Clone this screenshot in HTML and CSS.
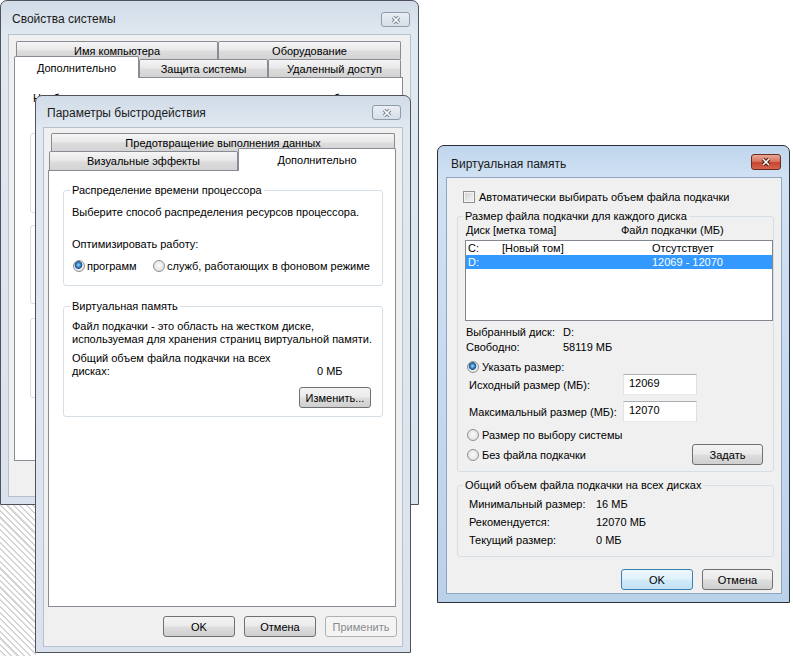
FILE: index.html
```html
<!DOCTYPE html>
<html lang="ru">
<head>
    <meta charset="UTF-8">
    <title>Виртуальная память</title>
    <link rel="stylesheet" href="styles.css">
</head>
<body>
    <div class="desktop">
        <div class="hatch"></div>

        <!-- Свойства системы (inactive, behind everything) -->
        <div class="win win-system">
            <div class="win-title">
                <span class="title-text">Свойства системы</span>
                <span class="close">
                    <svg width="14" height="10" viewBox="0 0 14 10"><path class="x-out" d="M4 2 10 8M10 2 4 8"/><path class="x-in" d="M4 2 10 8M10 2 4 8"/></svg>
                </span>
            </div>
            <div class="client">
                <div class="tab-row tab-row-back">
                    <div class="tab tab-name">Имя компьютера</div>
                    <div class="tab tab-hw">Оборудование</div>
                </div>
                <div class="tab-row tab-row-front">
                    <div class="tab tab-active tab-adv">Дополнительно</div>
                    <div class="tab tab-protect">Защита системы</div>
                    <div class="tab tab-remote">Удаленный доступ</div>
                </div>
                <div class="panel panel-system">
                    <p class="admin-note">Необходимо иметь права администратора для изменения большинства</p>
                    <div class="group-stub stub-perf"></div>
                    <div class="group-stub stub-profiles"></div>
                    <div class="group-stub stub-boot"></div>
                </div>
            </div>
        </div>

        <!-- Параметры быстродействия -->
        <div class="win win-perf">
            <div class="win-title">
                <span class="title-text">Параметры быстродействия</span>
                <span class="close">
                    <svg width="14" height="10" viewBox="0 0 14 10"><path class="x-out" d="M4 2 10 8M10 2 4 8"/><path class="x-in" d="M4 2 10 8M10 2 4 8"/></svg>
                </span>
            </div>
            <div class="client">
                <div class="tab-row tab-row-back">
                    <div class="tab tab-dep">Предотвращение выполнения данных</div>
                </div>
                <div class="tab-row tab-row-front">
                    <div class="tab tab-visual">Визуальные эффекты</div>
                    <div class="tab tab-active tab-extra">Дополнительно</div>
                </div>
                <div class="panel panel-perf">
                    <fieldset class="group group-cpu">
                        <legend>Распределение времени процессора</legend>
                        <p class="line">Выберите способ распределения ресурсов процессора.</p>
                        <p class="line line-optimize">Оптимизировать работу:</p>
                        <div class="radio-row">
                            <label class="opt opt-programs"><span class="radio checked"></span>программ</label>
                            <label class="opt"><span class="radio"></span>служб, работающих в фоновом режиме</label>
                        </div>
                    </fieldset>

                    <fieldset class="group group-vm">
                        <legend>Виртуальная память</legend>
                        <p class="line line-first">Файл подкачки - это область на жестком диске,</p>
                        <p class="line">используемая для хранения страниц виртуальной памяти.</p>
                        <div class="total-line">
                            <span class="total-text">Общий объем файла подкачки на всех<br>дисках:</span>
                            <span>0 МБ</span>
                        </div>
                        <div class="change-row">
                            <button class="btn">Изменить...</button>
                        </div>
                    </fieldset>
                </div>
                <div class="dialog-buttons">
                    <button class="btn">OK</button>
                    <button class="btn">Отмена</button>
                    <button class="btn btn-disabled">Применить</button>
                </div>
            </div>
        </div>

        <!-- Виртуальная память (active) -->
        <div class="win win-vm">
            <div class="win-title">
                <span class="title-text">Виртуальная память</span>
                <span class="close close-active">
                    <svg width="14" height="10" viewBox="0 0 14 10"><path class="x-out" d="M4 2 10 8M10 2 4 8"/><path class="x-in" d="M4 2 10 8M10 2 4 8"/></svg>
                </span>
            </div>
            <div class="client">
                <label class="check-row"><span class="checkbox"></span>Автоматически выбирать объем файла подкачки</label>

                <fieldset class="group group-drives">
                    <legend>Размер файла подкачки для каждого диска</legend>
                    <div class="list-head">
                        <span class="col-disk">Диск [метка тома]</span>
                        <span>Файл подкачки (МБ)</span>
                    </div>
                    <div class="listbox">
                        <div class="list-item">
                            <span class="col-drive">C:</span>
                            <span class="col-label">[Новый том]</span>
                            <span>Отсутствует</span>
                        </div>
                        <div class="list-item selected">
                            <span class="col-drive">D:</span>
                            <span class="col-label"></span>
                            <span>12069 - 12070</span>
                        </div>
                    </div>
                    <div class="info-row info-first"><span class="info-label">Выбранный диск:</span><span>D:</span></div>
                    <div class="info-row"><span class="info-label">Свободно:</span><span>58119 МБ</span></div>

                    <label class="opt opt-vm opt-custom"><span class="radio checked"></span>Указать размер:</label>
                    <div class="field-row">
                        <span class="field-label">Исходный размер (МБ):</span>
                        <input class="textbox" type="text" value="12069">
                    </div>
                    <div class="field-row field-max">
                        <span class="field-label">Максимальный размер (МБ):</span>
                        <input class="textbox" type="text" value="12070">
                    </div>
                    <label class="opt opt-vm opt-system"><span class="radio"></span>Размер по выбору системы</label>
                    <div class="set-row">
                        <label class="opt opt-vm"><span class="radio"></span>Без файла подкачки</label>
                        <button class="btn btn-set">Задать</button>
                    </div>
                </fieldset>

                <fieldset class="group group-total">
                    <legend>Общий объем файла подкачки на всех дисках</legend>
                    <div class="total-row total-first"><span class="total-label">Минимальный размер:</span><span>16 МБ</span></div>
                    <div class="total-row"><span class="total-label">Рекомендуется:</span><span>12070 МБ</span></div>
                    <div class="total-row"><span class="total-label">Текущий размер:</span><span>0 МБ</span></div>
                </fieldset>

                <div class="dialog-buttons vm-buttons">
                    <button class="btn btn-default">OK</button>
                    <button class="btn btn-cancel">Отмена</button>
                </div>
            </div>
        </div>
    </div>
</body>
</html>
```

FILE: styles.css
```css
* {
    margin: 0;
    padding: 0;
    box-sizing: border-box;
}

body {
    font-family: "Liberation Sans", Arial, sans-serif;
    font-size: 11px;
    color: #000;
    background: #fff;
}

.desktop {
    position: relative;
    width: 793px;
    height: 656px;
    overflow: hidden;
}

.hatch {
    position: absolute;
    left: 0;
    top: 505px;
    width: 36px;
    height: 151px;
    background: repeating-linear-gradient(45deg, #fff 0, #fff 3px, #d4d4d4 3px, #d4d4d4 4.5px);
}

/* ---------- windows ---------- */

.win {
    position: absolute;
    display: flex;
    flex-direction: column;
    border: 1px solid #4e535b;
    border-radius: 7px 7px 0 0;
    background: linear-gradient(#d1dce8, #e0e8f0 32px, #dae3ed);
}

.win-system { left: 0; top: 0; width: 419px; height: 505px; padding: 0 7px 7px; }
.win-perf { left: 35px; top: 95px; width: 376px; height: 558px; padding: 0 7px 5px; }
.win-vm {
    left: 437px;
    top: 145px;
    width: 353px;
    height: 458px;
    padding: 0 7px 8px 8px;
    border-color: #2b3038;
    background: linear-gradient(#c0d6ed, #d0e1f3 31px, #bad1ea);
}

.win-title {
    display: flex;
    justify-content: space-between;
    align-items: flex-start;
    flex: none;
    font-size: 12px;
    color: #1a1a1a;
}

.title-text { line-height: 16px; }

.win-system .win-title { height: 33px; padding-left: 4px; }
.win-system .title-text { margin-top: 10px; }
.win-system .close { margin: 11px 1px 0 0; }

.win-perf .win-title { height: 31px; padding-left: 4px; }
.win-perf .title-text { margin-top: 9px; }
.win-perf .close { margin: 9px 2px 0 0; }

.win-vm .win-title { height: 31px; padding-left: 5px; }
.win-vm .title-text { margin-top: 10px; }
.win-vm .close { margin: 8px 1px 0 0; }

.close {
    display: flex;
    align-items: center;
    justify-content: center;
    width: 29px;
    height: 15px;
    border: 1px solid #8e9bab;
    border-radius: 3px;
    background: linear-gradient(#eaeff5, #d6dee8);
}

.close .x-out { stroke: #7b8694; stroke-width: 3.6; fill: none; }
.close .x-in { stroke: #fff; stroke-width: 1.6; fill: none; }

.close-active {
    width: 30px;
    height: 16px;
    border-color: #6b2b21;
    background: linear-gradient(#eaa796, #d87560 45%, #c6452f 55%, #d4644d);
}

.close-active .x-out { stroke: #4a1a12; }

.client {
    flex: 1;
    background: #f0f0f0;
    border: 1px solid #b5c1ce;
}

.win-system .client { padding: 6px 7px 0 5px; }
.win-perf .client { padding: 5px 6px 0 4px; }
.win-vm .client { padding: 11px 7px 0 10px; border-color: #8ea6c0; }

/* ---------- tabs ---------- */

.tab-row { display: flex; }

.tab {
    display: flex;
    align-items: center;
    justify-content: center;
    height: 18px;
    border: 1px solid #898c95;
    border-bottom: 0;
    border-radius: 2px 2px 0 0;
    background: linear-gradient(#f5f5f5, #e9e9e9 45%, #dcdcdc 55%, #d3d3d3);
    white-space: nowrap;
}

.tab-row-front { align-items: flex-end; margin-top: -3px; }

.tab-active {
    position: relative;
    z-index: 1;
    background: #fff;
    margin-bottom: -1px;
}

.win-system .tab-row-back { margin-left: 2px; }
.win-system .tab-active { height: 22px; }
.tab-name { width: 202px; }
.tab-hw { width: 183px; }
.tab-adv { width: 125px; }
.tab-protect { width: 129px; }
.tab-remote { width: 133px; }

.win-perf .tab-row-back { margin-left: 3px; }
.win-perf .tab-row-back .tab { height: 18px; }
.win-perf .tab-row-front .tab { height: 19px; }
.win-perf .tab-row-front .tab-active { height: 23px; }
.tab-dep { width: 344px; }
.tab-visual { width: 189px; margin-left: 1px; }
.tab-extra { width: 158px; }

.panel {
    background: #fff;
    border: 1px solid #898c95;
}

.panel-system { height: 384px; padding: 13px 14px 0 15px; }
.panel-perf { height: 437px; padding: 0 12px 0 14px; }

.admin-note {
    line-height: 14px;
    margin-left: 3px;
    white-space: nowrap;
}

.group-stub {
    border: 1px solid #d5dfe5;
    border-radius: 3px;
}

.stub-perf { margin-top: 28px; height: 80px; }
.stub-profiles { margin-top: 12px; height: 79px; }
.stub-boot { margin-top: 14px; height: 80px; }

/* ---------- group boxes ---------- */

.group {
    min-width: 0;
    border: 1px solid #d5dfe5;
    border-radius: 3px;
    padding: 0 11px 0 8px;
}

.group legend {
    padding: 0 2px;
    margin-left: -2px;
    line-height: 14px;
}

.line { line-height: 14px; white-space: nowrap; }

.group-cpu { margin-top: 12px; padding-bottom: 12px; }
.group-cpu .line:first-of-type { margin-top: 8px; }
.line-optimize { margin-top: 18px; }

.radio-row {
    display: flex;
    margin-top: 8px;
    line-height: 14px;
}

.opt {
    display: flex;
    flex: none;
    align-items: center;
    gap: 2px;
    line-height: 14px;
    white-space: nowrap;
}

.opt-programs { width: 80px; margin-left: 1px; }

.radio {
    flex: none;
    width: 12px;
    height: 12px;
    border: 1px solid #8f9092;
    border-radius: 50%;
    background: radial-gradient(circle at 50% 45%, #fafafa, #d9d9d9);
}

.radio.checked {
    background: radial-gradient(circle at 45% 40%, #a9dcfa 0, #3c8ccc 2px, #1d4f86 3.5px, #eeeeee 4.2px, #d6d6d6 100%);
}

.group-vm { margin-top: 13px; padding-bottom: 8px; }
.group-vm .line { line-height: 13px; }
.group-vm .line-first { margin-top: 7px; }

.total-line {
    display: flex;
    align-items: flex-end;
    margin-top: 6px;
    line-height: 13px;
}

.total-text { width: 245px; }

.change-row {
    display: flex;
    justify-content: flex-end;
    margin-top: 9px;
}

/* ---------- buttons ---------- */

.btn {
    width: 72px;
    height: 21px;
    border: 1px solid #707070;
    border-radius: 3px;
    background: linear-gradient(#f3f3f3, #ebebeb 45%, #dddddd 55%, #cfcfcf);
    font: inherit;
    color: #000;
}

.btn-disabled {
    border-color: #adb2b5;
    background: #f4f4f4;
    color: #8a8a8a;
}

.btn-default {
    border-color: #3c7fb1;
    background: linear-gradient(#eef7fd, #e1f1fb 45%, #cfe9f8 55%, #c3e2f5);
}

.btn-cancel { width: 71px; }
.btn-set { width: 71px; }

.dialog-buttons {
    display: flex;
    justify-content: flex-end;
    gap: 9px;
    margin-top: 9px;
}

.win-perf .dialog-buttons { margin-right: -1px; }

.vm-buttons { margin-top: 12px; margin-right: 1px; }

/* ---------- virtual memory dialog ---------- */

.check-row {
    display: flex;
    align-items: center;
    gap: 4px;
    height: 15px;
    margin-left: 6px;
    white-space: nowrap;
}

.checkbox {
    flex: none;
    width: 12px;
    height: 12px;
    border: 1px solid #8e8f8f;
    background: linear-gradient(135deg, #d0d0d0, #f7f7f7);
    box-shadow: inset 0 0 0 1px #f4f4f4;
}

.group-drives { margin-top: 5px; padding: 0 10px 6px 7px; }

.list-head {
    display: flex;
    padding-left: 1px;
    line-height: 14px;
}

.col-disk { width: 155px; }

.listbox {
    height: 81px;
    margin: 3px -10px 0 0;
    border: 1px solid #828790;
    background: #fff;
}

.list-item {
    display: flex;
    padding-left: 2px;
    line-height: 14px;
}

.list-item.selected {
    background: #3399ff;
    color: #fff;
}

.col-drive { width: 34px; }
.col-label { width: 150px; }

.info-row {
    display: flex;
    padding-left: 1px;
    line-height: 15px;
    white-space: nowrap;
}

.info-first { margin-top: 4px; }
.info-label { width: 97px; flex: none; }

.opt-vm { gap: 3px; margin-left: 2px; }
.opt-custom { margin-top: 5px; }
.opt-system { margin-top: 6px; }

.field-row {
    display: flex;
    align-items: center;
    height: 21px;
    margin-left: 4px;
    white-space: nowrap;
}

.field-max { margin-top: 6px; }
.field-label { width: 154px; flex: none; }

.textbox {
    width: 74px;
    height: 21px;
    padding: 0 0 3px 5px;
    border: 1px solid;
    border-color: #abadb3 #dbdfe6 #e3e9ef #e2e3ea;
    background: #fff;
    font: inherit;
    color: #000;
    outline: none;
}

.set-row {
    display: flex;
    justify-content: space-between;
    align-items: center;
    margin-top: 2px;
}

.group-total { margin-top: 6px; padding: 0 10px 7px 7px; }

.total-row {
    display: flex;
    margin-left: 4px;
    line-height: 18px;
    white-space: nowrap;
}

.total-first { margin-top: 3px; }
.total-label { width: 127px; flex: none; }
```
